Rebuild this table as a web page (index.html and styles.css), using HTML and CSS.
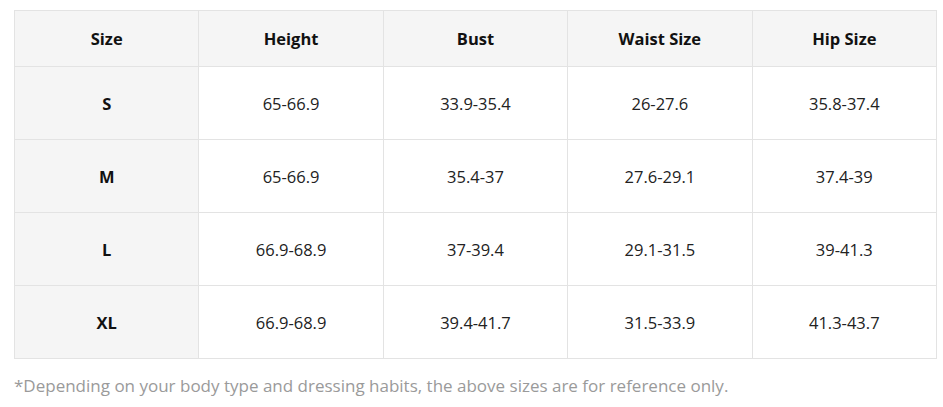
FILE: index.html
```html
<!DOCTYPE html>
<html>
<head>
<meta charset="utf-8">
<link rel="stylesheet" href="styles.css">
</head>
<body>
<div class="wrap">
<table class="chart">
<thead>
<tr><th>Size</th><th>Height</th><th>Bust</th><th>Waist Size</th><th>Hip Size</th></tr>
</thead>
<tbody>
<tr><th>S</th><td>65-66.9</td><td>33.9-35.4</td><td>26-27.6</td><td>35.8-37.4</td></tr>
<tr><th>M</th><td>65-66.9</td><td>35.4-37</td><td>27.6-29.1</td><td>37.4-39</td></tr>
<tr><th>L</th><td>66.9-68.9</td><td>37-39.4</td><td>29.1-31.5</td><td>39-41.3</td></tr>
<tr><th>XL</th><td>66.9-68.9</td><td>39.4-41.7</td><td>31.5-33.9</td><td>41.3-43.7</td></tr>
</tbody>
</table>
<p class="note">*Depending on your body type and dressing habits, the above sizes are for reference only.</p>
</div>
</body>
</html>
```
FILE: styles.css
```css
html, body { margin: 0; padding: 0; background: #fff; }
body { font-family: "Open Sans", "Noto Sans", sans-serif; color: #111; }
.wrap { padding: 10px 6px 0 14px; }
.chart {
  width: 923px;
  border-collapse: collapse;
  table-layout: fixed;
  font-size: 16.5px;
}
.chart th, .chart td {
  border: 1px solid #e3e3e3;
  text-align: center;
  vertical-align: middle;
  padding: 0;
}
.chart thead th {
  height: 55px;
  background: #f5f5f5;
  font-weight: 700;
  font-size: 16.5px;
}
.chart tbody th {
  background: #f5f5f5;
  font-weight: 700;
}
.chart tbody th, .chart tbody td { height: 72px; }
.chart td { color: #222; font-weight: 400; }
.note {
  margin: 15px 0 0;
  font-size: 17px;
  color: #9a9a9a;
}
```
